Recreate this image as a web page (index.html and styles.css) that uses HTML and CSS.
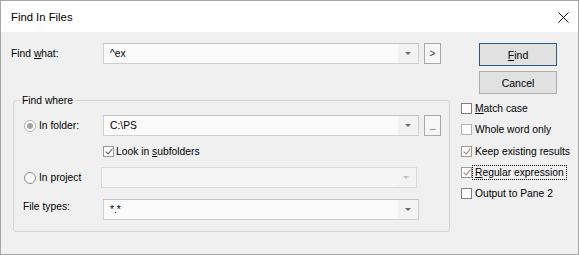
FILE: index.html
```html
<!DOCTYPE html>
<html lang="en">
<head>
  <meta charset="UTF-8" />
  <title>Find In Files</title>
  <link rel="stylesheet" href="styles.css">
</head>
<body>
  <div class="dialog">
    <div class="titlebar">
      <span class="title">Find In Files</span>
      <svg class="close" width="11" height="11" viewBox="0 0 11 11">
        <path d="M0.5 0.5L10.5 10.5M10.5 0.5L0.5 10.5" stroke="#111" stroke-width="1" />
      </svg>
    </div>

    <div class="content">
      <div class="left">
        <div class="what">
          <span class="lbl">Find <u>w</u>hat:</span>
          <div class="combo"><span class="val">^ex</span><i class="drop"></i></div>
          <button class="mini">&gt;</button>
        </div>

        <fieldset class="where">
          <legend>Find where</legend>
          <div class="grid">
            <span class="cell radio-cell"><i class="radio on"></i><span>In folder:</span></span>
            <div class="combo"><span class="val">C:\PS</span><i class="drop"></i></div>
            <button class="mini dots">...</button>

            <span></span>
            <span class="cell"><i class="box checked dark"></i><span>Look in <u>s</u>ubfolders</span></span>
            <span></span>

            <span class="cell radio-cell"><i class="radio"></i><span>In project</span></span>
            <div class="combo disabled shift"><span class="val"></span><i class="drop"></i></div>
            <span></span>

            <span class="cell types last">File types:</span>
            <div class="combo last"><span class="val">*.*</span><i class="drop"></i></div>
            <span class="last"></span>
          </div>
        </fieldset>
      </div>

      <div class="right">
        <button class="btn default"><u>F</u>ind</button>
        <button class="btn">Cancel</button>
        <ul class="options">
          <li><i class="box"></i><span class="txt"><u>M</u>atch case</span></li>
          <li><i class="box light"></i><span class="txt">Whole word only</span></li>
          <li><i class="box checked"></i><span class="txt">Keep existing results</span></li>
          <li><i class="box checked"></i><span class="txt focus"><u>R</u>egular expression</span></li>
          <li><i class="box"></i><span class="txt">Output to Pane 2</span></li>
        </ul>
      </div>
    </div>
  </div>
</body>
</html>
```

FILE: styles.css
```css
html, body {
  margin: 0;
  padding: 0;
  background: #f0f0f0;
}

.dialog {
  box-sizing: border-box;
  width: 579px;
  height: 255px;
  border: 1px solid #a6a6a6;
  background: #f0f0f0;
  font-family: 'Liberation Sans', Arial, sans-serif;
  font-size: 10.3px;
  color: #000;
}

.titlebar {
  height: 31px;
  background: #fff;
  display: flex;
  align-items: center;
  justify-content: space-between;
  padding: 0 9px 0 10px;
}

.title {
  font-size: 11.3px;
}

.close {
  display: block;
  margin-top: 1px;
}

.content {
  display: flex;
  padding: 11px 0 0 9px;
}

.left {
  width: 440px;
  flex: none;
}

.what {
  display: flex;
  align-items: center;
}

.lbl {
  width: 93px;
  padding-left: 1px;
  box-sizing: border-box;
}

u {
  text-decoration-thickness: 1px;
  text-underline-offset: 1px;
}

.combo {
  box-sizing: border-box;
  width: 316px;
  height: 21px;
  border: 1px solid #cfcfcf;
  border-top-color: #c4c4c4;
  background: #fbfbfb;
  display: flex;
  align-items: center;
}

.combo .val {
  flex: 1;
  padding-left: 6px;
  white-space: pre;
}

.combo .drop {
  width: 20px;
  height: 100%;
  background: #f3f3f3;
  position: relative;
}

.combo .drop::after {
  content: "";
  position: absolute;
  left: 7px;
  top: 8px;
  border-top: 3px solid #6e6e6e;
  border-left: 3px solid transparent;
  border-right: 3px solid transparent;
}

.combo.disabled {
  background: #f5f5f5;
  border-color: #dadada;
}

.combo.disabled .drop::after {
  border-top-color: #c4c4c4;
}

.combo.shift {
  margin-left: -2px;
}

.mini {
  box-sizing: border-box;
  width: 17px;
  height: 21px;
  margin-left: 5px;
  padding: 0;
  border: 1px solid #a9a9a9;
  background: #f7f7f7;
  font-family: inherit;
  font-size: 10px;
  color: #333;
}

.mini.dots {
  margin-left: 0;
  font-size: 9px;
  letter-spacing: -0.5px;
  padding-top: 2px;
}

.where {
  box-sizing: border-box;
  width: 437px;
  height: 138px;
  margin: 30px 0 0 3px;
  padding: 0;
  border: 1px solid #d5d5d5;
  border-radius: 3px;
  min-width: 0;
}

.where legend {
  margin-left: 6px;
  padding: 0 2px;
  line-height: 13px;
}

.grid {
  display: grid;
  grid-template-columns: 84px 316px 17px;
  grid-template-rows: 21px 21px 21px 21px;
  column-gap: 5px;
  row-gap: 5px;
  margin-top: 8px;
}

.grid .last {
  margin-top: 6px;
}

.cell {
  display: flex;
  align-items: center;
  white-space: nowrap;
}

.radio-cell {
  padding-left: 10px;
}

.types {
  padding-left: 9px;
}

.radio {
  box-sizing: border-box;
  width: 12px;
  height: 12px;
  border: 1px solid #8a8a8a;
  border-radius: 50%;
  background: #fff;
  margin-right: 3px;
  position: relative;
  flex: none;
}

.radio.on {
  border-color: #b0b0b0;
}

.radio.on::after {
  content: "";
  position: absolute;
  left: 2px;
  top: 2px;
  width: 6px;
  height: 6px;
  border-radius: 50%;
  background: #a3a3a3;
}

.box {
  box-sizing: border-box;
  width: 11px;
  height: 11px;
  border: 1px solid #7f7f7f;
  background: #fff;
  margin-right: 2px;
  position: relative;
  flex: none;
}

.box.light {
  border-color: #b3b3b3;
}

.box.checked {
  border-color: #9a9a9a;
}

.box.checked::after {
  content: "";
  position: absolute;
  left: 3px;
  top: 0;
  width: 3px;
  height: 6px;
  border-right: 1px solid #8a8a8a;
  border-bottom: 1px solid #8a8a8a;
  transform: rotate(40deg);
}

.box.checked.dark::after {
  border-color: #555;
}

.right {
  margin-left: 11px;
  width: 118px;
  flex: none;
}

.btn {
  display: block;
  box-sizing: border-box;
  width: 78px;
  height: 23px;
  margin: 0 0 5px 18px;
  padding: 0;
  border: 1px solid #adadad;
  background: #e1e1e1;
  font-family: inherit;
  font-size: 10.5px;
  color: #000;
}

.btn.default {
  border-color: #2c5a86;
}

.options {
  list-style: none;
  margin: 0;
  padding: 0;
  margin-top: -1px;
}

.options li {
  display: flex;
  align-items: center;
  height: 21.25px;
  white-space: nowrap;
}

.txt {
  padding: 0 1px;
}

.focus {
  outline: 1px dotted #000;
  outline-offset: 1px;
}
```
